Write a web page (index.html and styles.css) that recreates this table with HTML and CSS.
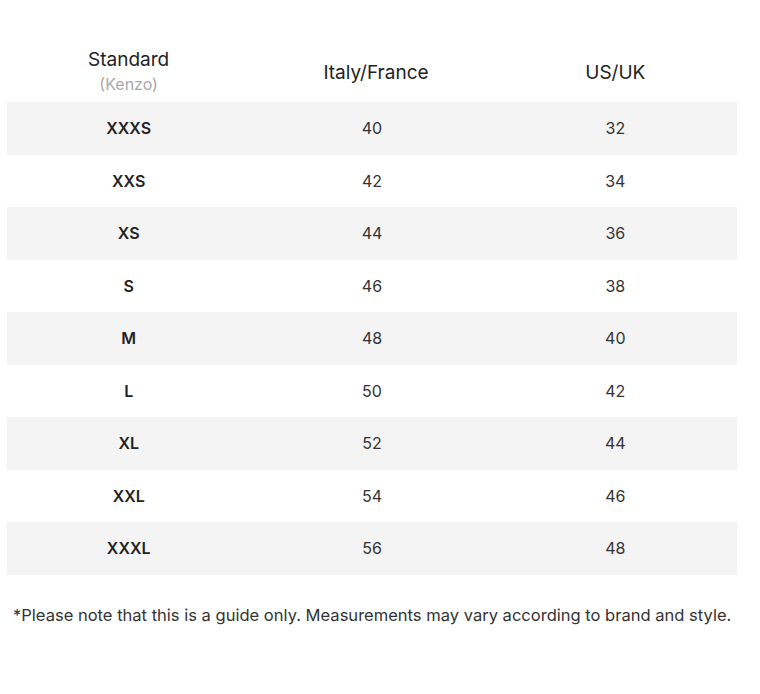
FILE: index.html
```html
<!DOCTYPE html>
<html>
<head>
<meta charset="utf-8">
<link rel="stylesheet" href="styles.css">
</head>
<body>
<div class="page">
  <table class="sizes">
    <thead>
      <tr>
        <th><span class="h-main">Standard</span><span class="h-sub">(Kenzo)</span></th>
        <th class="h-mid">Italy/France</th>
        <th>US/UK</th>
      </tr>
    </thead>
    <tbody>
      <tr><td class="std">XXXS</td><td>40</td><td>32</td></tr>
      <tr><td class="std">XXS</td><td>42</td><td>34</td></tr>
      <tr><td class="std">XS</td><td>44</td><td>36</td></tr>
      <tr><td class="std">S</td><td>46</td><td>38</td></tr>
      <tr><td class="std">M</td><td>48</td><td>40</td></tr>
      <tr><td class="std">L</td><td>50</td><td>42</td></tr>
      <tr><td class="std">XL</td><td>52</td><td>44</td></tr>
      <tr><td class="std">XXL</td><td>54</td><td>46</td></tr>
      <tr><td class="std">XXXL</td><td>56</td><td>48</td></tr>
    </tbody>
  </table>
  <p class="note">*Please note that this is a guide only. Measurements may vary according to brand and style.</p>
</div>
</body>
</html>
```

FILE: styles.css
```css
html, body {
  margin: 0;
  padding: 0;
  background: #fff;
}
body {
  font-family: Inter, "Liberation Sans", sans-serif;
  color: #222;
}
.page {
  padding: 42px 0 0 7px;
}
.sizes {
  width: 730px;
  border-collapse: collapse;
  table-layout: fixed;
}
.sizes th {
  font-weight: 400;
  font-size: 19px;
  text-align: center;
  vertical-align: middle;
  height: 60px;
  padding: 0;
  color: #222;
}
.sizes th.h-mid {
  padding-left: 8px;
}
.h-main {
  display: block;
  line-height: 24px;
}
.h-sub {
  display: block;
  font-size: 16px;
  line-height: 24px;
  color: #a8a8a8;
}
.sizes td {
  height: 52.5px;
  padding: 0;
  text-align: center;
  vertical-align: middle;
  font-size: 16px;
  color: #333;
}
.sizes tbody tr:nth-child(odd) {
  background: #f4f4f4;
}
.sizes td.std {
  font-weight: 600;
  color: #222;
}
.note {
  margin: 30px 0 0 6px;
  font-size: 16.55px;
  color: #333;
}
```
